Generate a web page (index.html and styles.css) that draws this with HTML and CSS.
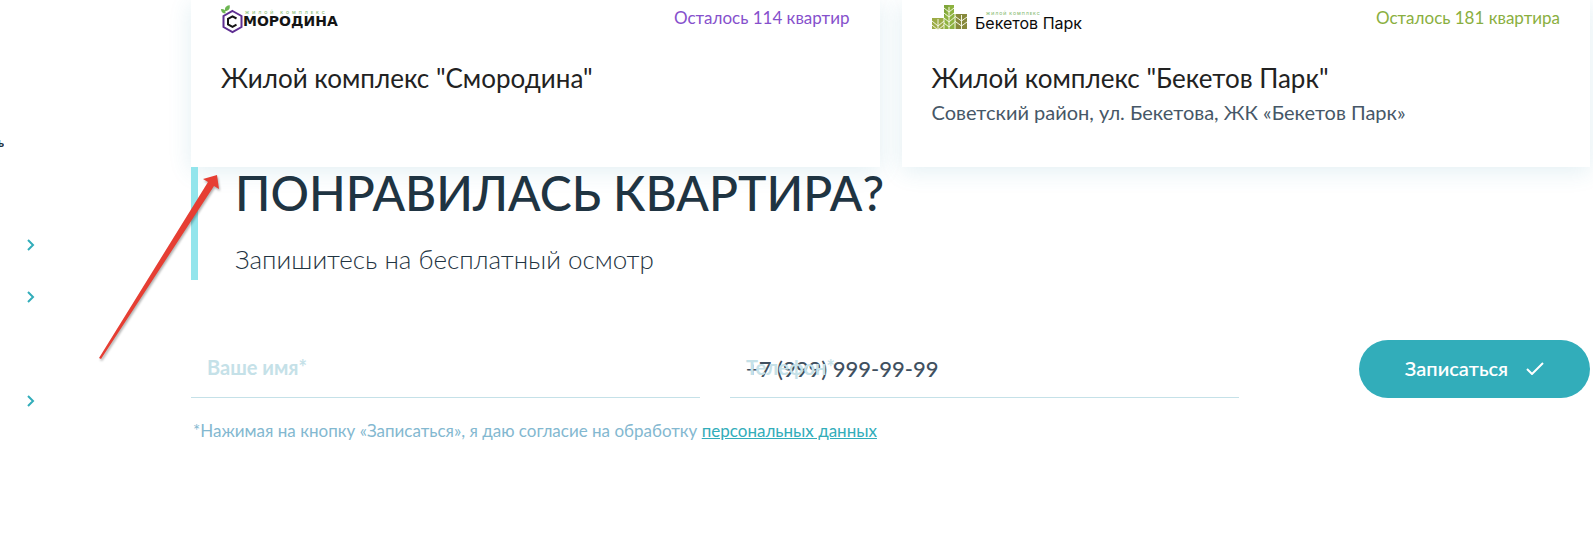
FILE: index.html
```html
<!DOCTYPE html>
<html lang="ru">
<head>
<meta charset="utf-8">
<meta name="viewport" content="width=device-width, initial-scale=1">
<title>Жилые комплексы</title>
<link rel="stylesheet" href="styles.css">
</head>
<body>
<div class="page">
  <aside class="sidebar">
    <p class="sidebar-title">ь</p>
    <ul class="menu">
      <li><button class="menu-toggle" type="button" aria-label="Раскрыть раздел 1"><svg width="8" height="12" viewBox="0 0 8 12"><path d="M1 1l5 5-5 5"/></svg></button></li>
      <li><button class="menu-toggle" type="button" aria-label="Раскрыть раздел 2"><svg width="8" height="12" viewBox="0 0 8 12"><path d="M1 1l5 5-5 5"/></svg></button></li>
      <li></li>
      <li><button class="menu-toggle" type="button" aria-label="Раскрыть раздел 4"><svg width="8" height="12" viewBox="0 0 8 12"><path d="M1 1l5 5-5 5"/></svg></button></li>
    </ul>
  </aside>

  <main class="content">
    <section class="cards">
      <article class="card">
        <div class="card-top">
          <svg class="logo" width="124" height="30" viewBox="0 0 124 30" role="img" aria-label="Смородина">
            <path d="M11.500 6l9 5v11l-9 5-9-5V11z" fill="none" stroke="#5f2f92" stroke-width="2"/>
            <path d="M15.500 13.500l-4-2.200-4.500 2.500v5.500l4.500 2.500 4-2.200" fill="none" stroke="#141414" stroke-width="2"/>
            <path d="M4 6C3.500 2.500 5 1 8.500 0 9.500 3.500 8 6 4 6zM0 4c3 0 5 1 4.500 4.500C2 8.500 0 7 0 4z" fill="#6db653"/>
            <text class="logo-tag" x="24" y="9" letter-spacing="3">ЖИЛОЙ КОМПЛЕКС</text>
            <text class="logo-smorodina" x="22" y="21">МОРОДИНА</text>
          </svg>
          <span class="left left-violet">Осталось 114 квартир</span>
        </div>
        <h3 class="card-title">Жилой комплекс "Смородина"</h3>
      </article>

      <article class="card">
        <div class="card-top">
          <svg class="logo" width="164" height="30" viewBox="0 0 164 30" role="img" aria-label="Бекетов Парк">
            <path d="M0 13h12v11H0z" fill="#9cab45"/>
            <path d="M12 0h10v24H12z" fill="#7fa53a"/>
            <path d="M24 9h11v15H24z" fill="#87893b"/>
            <path d="M17 0h5v9h2v15H12V12z" fill="#8db23f"/>
            <path d="M6 24V14M0 16l6 5 6-5M0 20l6 5 6-5M17 24V2M12 3l5 4 5-4M12 8l5 4 5-4M12 13l5 4 7-6M12 18l5 4 7-6M29.500 24V10M24 12l5.500 4 5.500-4M24 17l5.500 4 5.500-4M12 13v11M23 9v15" fill="none" stroke="#f3f5e3" stroke-width="1"/>
            <text class="logo-tag" x="54" y="10" letter-spacing="1">ЖИЛОЙ КОМПЛЕКС</text>
            <text class="logo-beketov" x="43" y="24">Бекетов Парк</text>
          </svg>
          <span class="left left-green">Осталось 181 квартира</span>
        </div>
        <h3 class="card-title">Жилой комплекс "Бекетов Парк"</h3>
        <p class="card-address">Советский район, ул. Бекетова, ЖК «Бекетов Парк»</p>
      </article>
    </section>

    <section class="request">
      <header class="request-head">
        <h2 class="request-title">ПОНРАВИЛАСЬ КВАРТИРА?</h2>
        <p class="request-sub">Запишитесь на бесплатный осмотр</p>
      </header>
      <form class="form">
        <div class="field">
          <input class="field-input" id="name" type="text">
          <label class="field-label" for="name">Ваше имя*</label>
        </div>
        <div class="field">
          <input class="field-input" id="phone" type="tel" value="+7 (999) 999-99-99">
          <label class="field-label" for="phone">Телефон*</label>
        </div>
        <button class="submit" type="button">Записаться
          <svg width="18" height="13" viewBox="0 0 18 13"><path d="M1 7l5 5L17 1"/></svg>
        </button>
      </form>
      <p class="consent">*Нажимая на кнопку «Записаться», я даю согласие на обработку <a href="#">персональных данных</a></p>
    </section>
  </main>

  <svg class="arrow" width="126" height="190" viewBox="0 0 126 190" aria-hidden="true">
    <path d="M120 2l2 14-5-3L4 186l-2-1L111 9l-5-3z"/>
  </svg>
</div>
</body>
</html>
```
FILE: styles.css
```css
* {
  box-sizing: border-box;
}

body {
  margin: 0;
  background: #fff;
  color: #1f3442;
  font-family: Lato, "Open Sans", sans-serif;
}

h2, h3, p, ul {
  margin: 0;
  padding: 0;
  font-weight: 400;
}

.page {
  display: flex;
  position: relative;
}

/* Sidebar */
.sidebar {
  flex: 0 0 191px;
  padding-top: 132px;
}

.sidebar-title {
  display: flex;
  justify-content: flex-end;
  width: 4px;
  overflow: hidden;
  font-size: 13px;
  font-weight: 700;
  line-height: 20px;
}

.menu {
  padding-top: 67px;
  list-style: none;
}

.menu li {
  display: flex;
  align-items: center;
  height: 52px;
  padding-left: 27px;
}

.menu-toggle {
  display: flex;
  padding: 0;
  border: 0;
  background: none;
}

.menu-toggle path {
  fill: none;
  stroke: #32adba;
  stroke-width: 2;
}

/* Cards */
.content {
  flex: 1;
  min-width: 0;
  padding-right: 3px;
}

.cards {
  display: grid;
  grid-template-columns: 1fr 1fr;
  gap: 22px;
}

.card {
  min-height: 167px;
  padding: 5px 30px 32px;
  background: #fff;
  box-shadow: 0 4px 22px rgba(50, 140, 170, 0.14);
}

.card-top {
  display: flex;
  justify-content: space-between;
  height: 56px;
}

.logo-tag {
  fill: #8fc07a;
  font-family: Inter, sans-serif;
  font-size: 4px;
  font-weight: 600;
}

.logo-smorodina {
  fill: #141414;
  font-family: "DejaVu Sans", sans-serif;
  font-size: 14px;
  font-weight: 700;
}

.logo-beketov {
  fill: #0c0c0c;
  font-family: Inter, sans-serif;
  font-size: 16px;
}

.left {
  font-size: 17px;
  line-height: 26px;
}

.left-violet {
  color: #8650cc;
}

.left-green {
  color: #8aaf40;
}

.card-title {
  color: #222;
  font-size: 26px;
  line-height: 34px;
}

.card-address {
  color: #465767;
  font-size: 20px;
  line-height: 34px;
}

/* Request form */
.request {
  position: relative;
}

.request-head {
  padding-left: 37px;
  border-left: 7px solid #93e5ec;
}

.request-title {
  font-size: 48px;
  font-weight: 500;
  line-height: 52px;
}

.request-sub {
  padding: 22px 0 3px;
  font-size: 26px;
  font-weight: 300;
  line-height: 36px;
}

.form {
  display: flex;
  gap: 30px;
  padding-top: 60px;
}

.field {
  flex: 1;
  position: relative;
}

.field-input {
  width: 100%;
  height: 58px;
  padding: 0 16px;
  border: 0;
  border-bottom: 1px solid #c5e1e8;
  background: none;
  color: #40505f;
  font-family: inherit;
  font-size: 22px;
  font-weight: 500;
}

.field-label {
  position: absolute;
  top: 14px;
  left: 16px;
  color: #c5e1e8;
  font-size: 20px;
  font-weight: 700;
  line-height: 26px;
  pointer-events: none;
}

.submit {
  display: flex;
  align-items: center;
  justify-content: center;
  gap: 18px;
  width: 231px;
  height: 58px;
  margin-left: 90px;
  padding: 0 0 2px;
  border: 0;
  border-radius: 29px;
  background: #32adba;
  color: #fff;
  font-family: inherit;
  font-size: 20px;
  font-weight: 600;
}

.submit path {
  fill: none;
  stroke: #fff;
  stroke-width: 2;
}

.consent {
  padding: 20px 0 0 2px;
  color: #83b8d0;
  font-size: 17px;
  line-height: 26px;
}

.consent a {
  color: #32adba;
}

/* Pointer laid over the page */
.arrow {
  position: absolute;
  top: 173px;
  left: 97px;
  fill: #e63e33;
  filter: drop-shadow(1px 2px 1px rgba(0, 0, 0, 0.3));
}
```
